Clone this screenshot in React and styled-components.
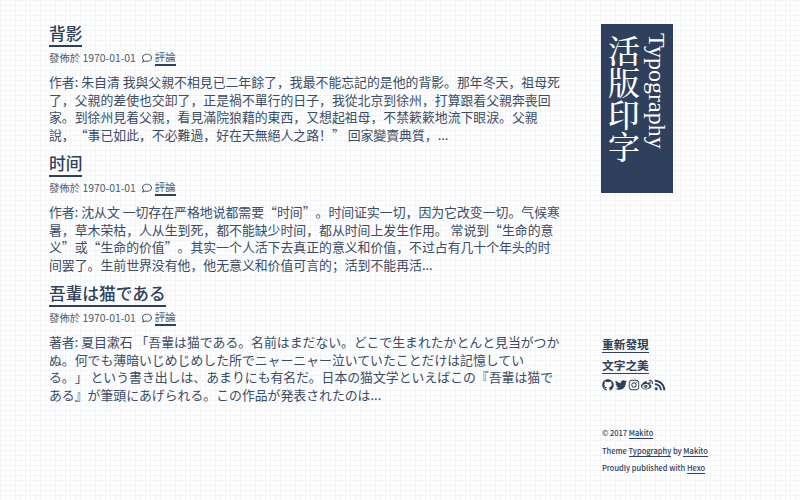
import React from 'react';
import styled, { createGlobalStyle } from 'styled-components';
import { FaGithub, FaTwitter, FaInstagram, FaWeibo, FaRss, FaRegComment } from 'react-icons/fa';

const Global = createGlobalStyle`
  html, body { margin: 0; padding: 0; }
  body {
    width: 800px; height: 500px; overflow: hidden;
    background-color: #fff;
    background-image:
      linear-gradient(to right, #f4f5f7 1px, transparent 1px),
      linear-gradient(to bottom, #f4f5f7 1px, transparent 1px);
    background-size: 5px 5px;
    font-family: "Noto Sans CJK SC", "Noto Sans CJK TC", sans-serif;
    color: #2e405b;
    text-spacing-trim: space-all;
    text-autospace: no-autospace;
  }
`;
const Page = styled.div`
  display: flex; height: 500px; box-sizing: border-box; padding: 20px 0 0 49px;
`;
const Main = styled.main`
  width: 518px; flex: none; display: flex; flex-direction: column;
`;
const Post = styled.article`
  margin-bottom: 7px;
`;
const Head = styled.div`
  display: flex;
`;
const Title = styled.h2`
  margin: 0; font-size: 16.7px; line-height: 20px; font-weight: 500;
  border-bottom: 2px solid #2e405b; padding: 3px 0 2px; color: #2e405b;
`;
const Meta = styled.div`
  display: flex; align-items: center; font-size: 10.4px; line-height: 14px; margin-top: 3px; color: #4c5a6e;
`;
const CommentWrap = styled.span`
  display: inline-flex; align-items: center; margin-left: 6px; gap: 3px;
`;
const MetaLink = styled.a`
  color: inherit; text-decoration: none; border-bottom: 2px solid #2e405b;
`;
const Link = styled.a`
  color: inherit; text-decoration: none; border-bottom: 1px solid #2e405b;
`;
const Excerpt = styled.p`
  margin: 7px 0 0; font-size: 12.87px; line-height: 17.5px; width: 513px; color: #3b4c66;
`;
const Side = styled.aside`
  margin: 4px 0 0 34px; width: 160px; display: flex; flex-direction: column; height: 476px;
`;
const Logo = styled.div`
  width: 72px; height: 169px; background: #2e405b; color: #fff; box-sizing: border-box;
  display: flex; flex-direction: column; align-items: flex-start; justify-content: center; gap: 4px; padding-top: 9px;
  writing-mode: vertical-rl; font-family: "Noto Serif CJK TC", "Liberation Serif", "Noto Sans CJK TC", serif;
`;
const LogoCn = styled.div`
  font-size: 32px; line-height: 36px; font-weight: 500; padding-top: 2px;
`;
const LogoEn = styled.div`
  font-size: 24px; line-height: 22px; font-family: "Liberation Serif", serif;
`;
const Nav = styled.nav`
  margin: 142px 0 0 1px; display: flex; flex-direction: column; align-items: flex-start; gap: 3px;
`;
const NavItem = styled.a`
  font-size: 11.7px; line-height: 17px; font-weight: 700; border-bottom: 1px solid #2e405b; color: #2e405b;
`;
const Icons = styled.div`
  display: flex; gap: 1px; margin: 5px 0 0 1px; font-size: 12px; color: #2e405b; align-items: center;
`;
const Foot = styled.footer`
  margin: 33px 0 0 1px; font-size: 7.5px; line-height: 17.5px; font-weight: 500; color: #2e405b;
`;
const FootLine = styled.div``;

const posts = [
  { t: '背影', x: <>作者: 朱自清 我與父親不相見已二年餘了，我最不能忘記的是他的背影。那年冬天，祖母死了，父親的差使也交卸了，正是禍不單行的日子，我從北京到徐州，打算跟着父親奔喪回家。到徐州見着父親，看見滿院狼藉的東西，又想起祖母，不禁簌簌地流下眼淚。父親說，“事已如此，不必難過，好在天無絕人之路！” 回家變賣典質，...</> },
  { t: '时间', x: <>作者: 沈从文 一切存在严格地说都需要“时间”。时间证实一切，因为它改变一切。气候寒暑，草木荣枯，人从生到死，都不能缺少时间，都从时间上发生作用。 常说到“生命的意义”或“生命的价值”。其实一个人活下去真正的意义和价值，不过占有几十个年头的时间罢了。生前世界没有他，他无意义和价值可言的；活到不能再活...</> },
  { t: '吾輩は猫である', x: <>著者: 夏目漱石 「吾輩は猫である。名前はまだない。どこで生まれたかとんと見当がつかぬ。何でも薄暗いじめじめした所でニャーニャー泣いていたことだけは記憶している。」 という書き出しは、あまりにも有名だ。日本の猫文学といえばこの『吾輩は猫である』が筆頭にあげられる。この作品が発表されたのは...</> },
];

export default function App() {
  return (
    <Page>
      <Global />
      <Main>
        {posts.map(p => (
          <Post key={p.t}>
            <Head><Title>{p.t}</Title></Head>
            <Meta>發佈於 1970-01-01<CommentWrap><FaRegComment size={10} /><MetaLink>評論</MetaLink></CommentWrap></Meta>
            <Excerpt>{p.x}</Excerpt>
          </Post>
        ))}
      </Main>
      <Side>
        <Logo><LogoEn>Typography</LogoEn><LogoCn>活版印字</LogoCn></Logo>
        <Nav>
          <NavItem>重新發現</NavItem>
          <NavItem>文字之美</NavItem>
        </Nav>
        <Icons><FaGithub /><FaTwitter /><FaInstagram /><FaWeibo /><FaRss /></Icons>
        <Foot>
          <FootLine>© 2017 <Link>Makito</Link></FootLine>
          <FootLine>Theme <Link>Typography</Link> by <Link>Makito</Link></FootLine>
          <FootLine>Proudly published with <Link>Hexo</Link></FootLine>
        </Foot>
      </Side>
    </Page>
  );
}
